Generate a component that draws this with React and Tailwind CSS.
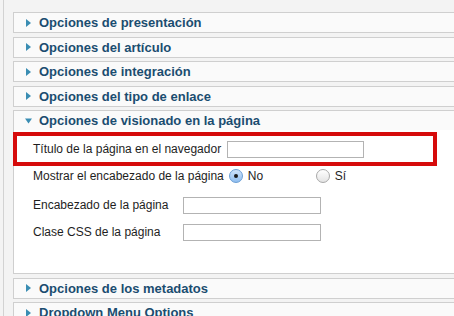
import React from "react";

const Arrow = ({ open }) => (
    <svg width="7" height="8" viewBox="0 0 7 8" className="shrink-0">
        {open
            ? <polygon points="0,1.5 7,1.5 3.5,6.5" fill="#3a8db3" />
            : <polygon points="1,0 6,4 1,8" fill="#3a8db3" />}
    </svg>
);

const Header = ({ title, open }) => (
    <div className="h-[19px] flex items-center gap-[7px] pl-[11px]">
        <Arrow open={open} />
        <span className="text-[13px] font-bold text-[#1b4d70] leading-none">{title}</span>
    </div>
);

const Panel = ({ title }) => (
    <div className="border border-r-0 border-[#cfcfcf] bg-[#fafafa] mb-[3.5px]">
        <Header title={title} />
    </div>
);

const Input = ({ w }) => (
    <div className={`h-[17px] border border-[#b3b3b3] bg-white ${w}`} />
);

const Radio = ({ checked }) => (
    <span className={`w-[14px] h-[14px] rounded-full border flex items-center justify-center ${checked ? "border-[#6a9ed4] bg-gradient-to-b from-[#cfe3fa] to-[#8fbef0]" : "border-[#a8a8a8] bg-gradient-to-b from-white to-[#e4e4e4]"}`}>
        {checked && <span className="w-[4px] h-[4px] rounded-full bg-[#1a1a1a]" />}
    </span>
);

export default function App() {
    return (
        <div className="w-[454px] h-[316px] overflow-hidden bg-[#f3f3f3] flex font-['Liberation_Sans',Arial,sans-serif] relative">
            <div className="w-[3px]" />
            <div className="border-l border-[#d2d2d2] flex-1 pl-[9px] pt-[12px]">
                <Panel title="Opciones de presentación" />
                <Panel title="Opciones del artículo" />
                <Panel title="Opciones de integración" />
                <Panel title="Opciones del tipo de enlace" />

                {/* expanded panel */}
                <div className="border border-r-0 border-[#cfcfcf] bg-white mb-[3.5px]">
                    <div className="bg-[#fafafa]">
                        <Header title="Opciones de visionado en la página" open />
                    </div>
                    <div className="pl-[19px] pt-[10px] pb-[32px] text-[12px] text-[#1e1e1e]">
                        <div className="h-[18px] flex items-center gap-[6px]">
                            <span>Título de la página en el navegador</span>
                            <Input w="w-[137px]" />
                        </div>
                        <div className="h-[18px] flex items-center mt-[9px]">
                            <span className="mr-[5px]">Mostrar el encabezado de la página</span>
                            <Radio checked />
                            <span className="ml-[5px] w-[68px]">No</span>
                            <Radio />
                            <span className="ml-[5px]">Sí</span>
                        </div>
                        <div className="h-[18px] flex items-center mt-[11px]">
                            <span className="w-[150px]">Encabezado de la página</span>
                            <Input w="w-[138px]" />
                        </div>
                        <div className="h-[18px] flex items-center mt-[9px]">
                            <span className="w-[150px]">Clase CSS de la página</span>
                            <Input w="w-[138px]" />
                        </div>
                    </div>
                </div>

                <Panel title="Opciones de los metadatos" />
                <Panel title="Dropdown Menu Options" />
            </div>

            {/* red highlight annotation */}
            <div className="absolute left-[13px] top-[132px] w-[424px] h-[34px] border-4 border-[#d60b0b]" />
        </div>
    );
}
